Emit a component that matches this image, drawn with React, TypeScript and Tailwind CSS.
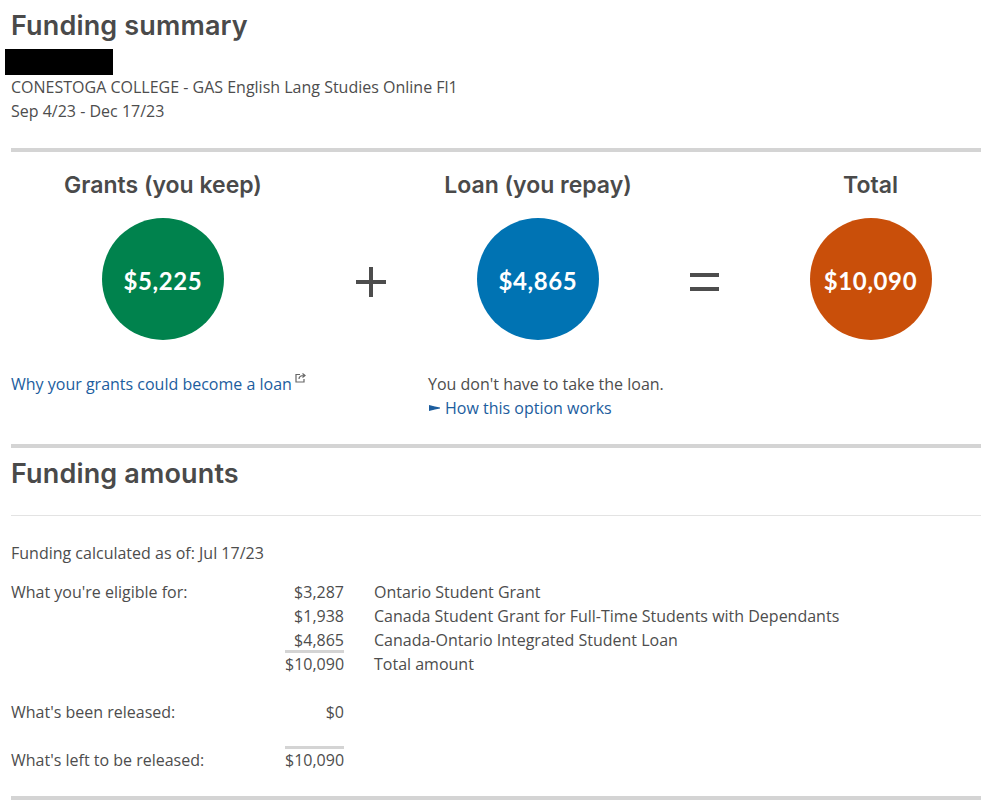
const heading = "font-['Inter',sans-serif] font-semibold text-[#4a4a4a]";

function Circle({ amount, color }: { amount: string; color: string }) {
  return (
    <div className={`mt-[19px] mx-auto w-[122px] h-[122px] rounded-full flex items-center justify-center pt-1 text-white text-2xl font-bold font-['Lato',sans-serif] tracking-[0.6px] ${color}`}>
      {amount}
    </div>
  );
}

function AmountRow({ label, amount, note, rule }: { label?: string; amount: string; note?: string; rule?: boolean }) {
  return (
    <div className="flex h-6 leading-6">
      <div className="w-[274px]">{label}</div>
      <div className="w-[59px] relative text-right">
        {rule && <div className="absolute left-0 right-0 -top-[2px] h-[3px] bg-[#d4d4d4]" />}
        {amount}
      </div>
      <div className="ml-[30px]">{note}</div>
    </div>
  );
}

export default function App() {
  return (
    <div className="w-[991px] h-[806px] overflow-hidden bg-white pl-[11px] pr-[10px] font-['Open_Sans',sans-serif] text-base leading-6 text-[#4d4d4d]">
      <h1 className={`${heading} text-[27px] tracking-[0.15px] leading-8 pt-[10px]`}>Funding summary</h1>
      <div className="-ml-[6px] mt-[7px] w-[108px] h-[26px] bg-black" />
      <div>CONESTOGA COLLEGE - GAS English Lang Studies Online Fl1</div>
      <div>Sep 4/23 - Dec 17/23</div>

      <div className="mt-[25px] h-1 bg-[#d4d4d4]" />

      <div className="grid grid-cols-[304px_112px_222px_111px_221px] mt-[19px]">
        <div className="text-center">
          <h2 className={`${heading} text-[23px] leading-[28px]`}>Grants (you keep)</h2>
          <Circle amount="$5,225" color="bg-[#00824d]" />
        </div>
        <div className="flex items-center justify-center pt-[53px] text-[#4d4d4d]">
          <svg width="30" height="30" viewBox="0 0 30 30" fill="currentColor">
            <rect x="0" y="13" width="30" height="4" />
            <rect x="13" y="0" width="4" height="30" />
          </svg>
        </div>
        <div className="text-center">
          <h2 className={`${heading} text-[23px] leading-[28px]`}>Loan (you repay)</h2>
          <Circle amount="$4,865" color="bg-[#0073b3]" />
        </div>
        <div className="flex items-center justify-center pt-[53px] text-[#4d4d4d]">
          <svg width="29" height="18" viewBox="0 0 29 18" fill="currentColor">
            <rect x="0" y="0" width="29" height="4" />
            <rect x="0" y="14" width="29" height="4" />
          </svg>
        </div>
        <div className="text-center">
          <h2 className={`${heading} text-[23px] leading-[28px]`}>Total</h2>
          <Circle amount="$10,090" color="bg-[#c94f0a]" />
        </div>
      </div>

      <div className="flex mt-[32px]">
        <div className="w-[417px]">
          <a className="text-[#1c5d9e]">Why your grants could become a loan</a>
          <svg className="inline-block ml-[3px] align-[7px]" width="11" height="11" viewBox="0 0 11 11" fill="none" stroke="#666666" strokeWidth="1.2">
            <path d="M5 2.5H1v7.5h8V7" />
            <path d="M4 7c0-2.5 2-3.5 5-3.5M7.5 1.5l2.5 2-2.5 2" />
          </svg>
        </div>
        <div>
          <div>You don't have to take the loan.</div>
          <a className="text-[#1c5d9e] flex items-center">
            <svg className="ml-[1px] mr-[5px]" width="11" height="8" viewBox="0 0 11 8" fill="currentColor">
              <path d="M0 1L6 2.6 11 3.6V4.4L6 5.4 0 7z" />
            </svg>
            How this option works
          </a>
        </div>
      </div>

      <div className="mt-[24px] h-1 bg-[#d4d4d4]" />

      <h2 className={`${heading} text-[27px] tracking-[0.15px] leading-8 mt-[10px]`}>Funding amounts</h2>
      <div className="mt-[25px] h-px bg-[#e3e3e3]" />

      <div className="mt-[25px]">Funding calculated as of: Jul 17/23</div>

      <div className="mt-[15px]">
        <AmountRow label="What you're eligible for:" amount="$3,287" note="Ontario Student Grant" />
        <AmountRow amount="$1,938" note="Canada Student Grant for Full-Time Students with Dependants" />
        <AmountRow amount="$4,865" note="Canada-Ontario Integrated Student Loan" />
        <AmountRow amount="$10,090" note="Total amount" rule />
        <div className="h-6" />
        <AmountRow label="What's been released:" amount="$0" />
        <div className="h-6" />
        <AmountRow label="What's left to be released:" amount="$10,090" rule />
      </div>

      <div className="mt-[24px] h-1 bg-[#d4d4d4]" />
    </div>
  );
}
